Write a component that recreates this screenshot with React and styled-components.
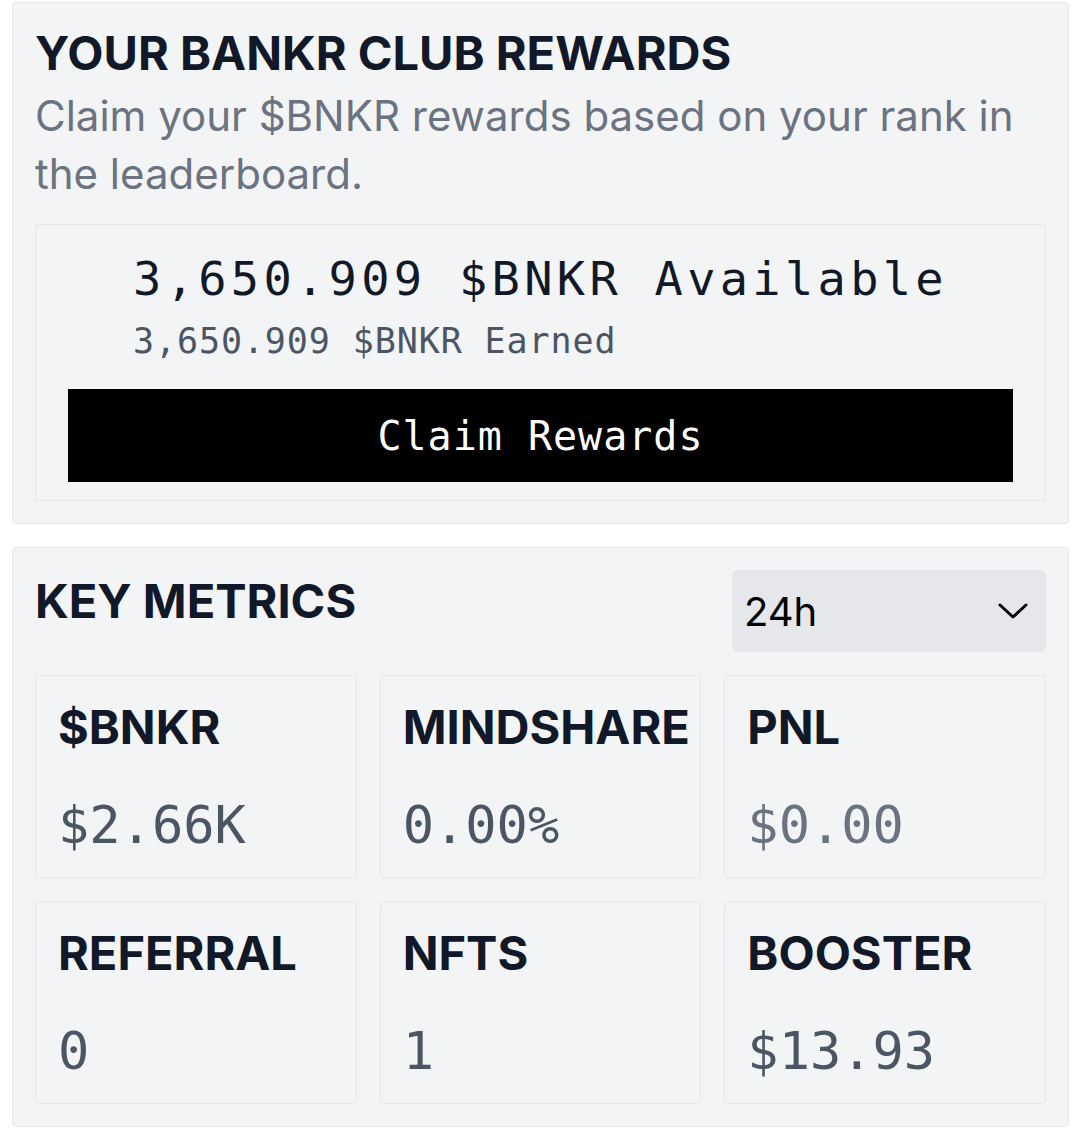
import React from 'react';
import styled, { createGlobalStyle } from 'styled-components';

const GlobalStyle = createGlobalStyle`
  body {
    margin: 0;
    background: #ffffff;
    font-family: Inter, "Noto Sans", sans-serif;
  }
  * { box-sizing: border-box; }
`;

const Page = styled.div`
  display: flex;
  flex-direction: column;
  gap: 23px;
  padding: 2px 11px 8px 12px;
`;

const Card = styled.section`
  background: #f3f4f6;
  border: 1px solid #e5e7eb;
  border-radius: 4px;
  padding: 22px;
`;

const Heading = styled.h2`
  margin: 0;
  font-size: 47px;
  line-height: 56px;
  font-weight: 700;
  color: #111827;
  padding-top: ${(p) => p.$offset || 0}px;
`;

const Subtitle = styled.p`
  margin: 6px 0 0;
  font-size: 42px;
  line-height: 58px;
  color: #6b7280;
`;

const RewardBox = styled.div`
  margin-top: 21px;
  border: 1px solid #e5e7eb;
  border-radius: 2px;
  padding: 26px 32px 18px;
  display: flex;
  flex-direction: column;
  align-items: center;
`;

const Amounts = styled.div`
  display: flex;
  flex-direction: column;
  align-items: flex-start;
  font-family: "DejaVu Sans Mono", "Liberation Mono", monospace;
  font-variant-numeric: slashed-zero;
`;

const Available = styled.div`
  font-size: 47px;
  line-height: 55px;
  letter-spacing: 4.3px;
  color: #111827;
`;

const Earned = styled.div`
  margin-top: 15px;
  font-size: 35px;
  line-height: 41px;
  letter-spacing: 0.9px;
  color: #4b5563;
`;

const ClaimButton = styled.button`
  margin-top: 27px;
  width: 100%;
  height: 93px;
  background: #000000;
  color: #ffffff;
  border: none;
  border-radius: 0;
  font-family: "DejaVu Sans Mono", "Liberation Mono", monospace;
  font-size: 40px;
  letter-spacing: 1px;
  display: flex;
  align-items: center;
  justify-content: center;
  cursor: pointer;
`;

const HeaderRow = styled.div`
  display: flex;
  justify-content: space-between;
  align-items: flex-start;
`;

const Select = styled.div`
  width: 314px;
  height: 82px;
  background: #e5e7eb;
  border-radius: 6px;
  display: flex;
  align-items: center;
  justify-content: space-between;
  padding: 0 18px 0 12px;
  font-size: 40px;
  color: #000000;
`;

const Grid = styled.div`
  margin-top: 23px;
  display: grid;
  grid-template-columns: repeat(3, minmax(0, 1fr));
  gap: 23px;
`;

const Metric = styled.div`
  background: #f3f4f6;
  border: 1px solid #e5e7eb;
  border-radius: 4px;
  padding: 23px 22px 22px;
`;

const MetricLabel = styled.div`
  font-size: 47px;
  line-height: 56px;
  font-weight: 700;
  color: #111827;
  white-space: nowrap;
`;

const MetricValue = styled.div`
  margin-top: 40px;
  font-family: "DejaVu Sans Mono", "Liberation Mono", monospace;
  font-variant-numeric: slashed-zero;
  font-size: 52px;
  line-height: 60px;
  color: ${(p) => (p.$muted ? '#6b7280' : '#4b5563')};
`;

const metrics = [
  { label: '$BNKR', value: '$2.66K' },
  { label: 'MINDSHARE', value: '0.00%' },
  { label: 'PNL', value: '$0.00', muted: true },
  { label: 'REFERRAL', value: '0' },
  { label: 'NFTS', value: '1' },
  { label: 'BOOSTER', value: '$13.93' },
];

function Chevron() {
  return (
    <svg width="30" height="18" viewBox="0 0 30 18" fill="none">
      <polyline points="2,3 15,15 28,3" stroke="#000" strokeWidth="3" strokeLinecap="round" strokeLinejoin="round" />
    </svg>
  );
}

export default function App() {
  return (
    <>
      <GlobalStyle />
      <Page>
        <Card>
          <Heading>YOUR BANKR CLUB REWARDS</Heading>
          <Subtitle>Claim your $BNKR rewards based on your rank in the leaderboard.</Subtitle>
          <RewardBox>
            <Amounts>
              <Available>3,650.909 $BNKR Available</Available>
              <Earned>3,650.909 $BNKR Earned</Earned>
            </Amounts>
            <ClaimButton>Claim Rewards</ClaimButton>
          </RewardBox>
        </Card>

        <Card>
          <HeaderRow>
            <Heading $offset={3}>KEY METRICS</Heading>
            <Select>
              <span>24h</span>
              <Chevron />
            </Select>
          </HeaderRow>
          <Grid>
            {metrics.map((m) => (
              <Metric key={m.label}>
                <MetricLabel>{m.label}</MetricLabel>
                <MetricValue $muted={m.muted}>{m.value}</MetricValue>
              </Metric>
            ))}
          </Grid>
        </Card>
      </Page>
    </>
  );
}
